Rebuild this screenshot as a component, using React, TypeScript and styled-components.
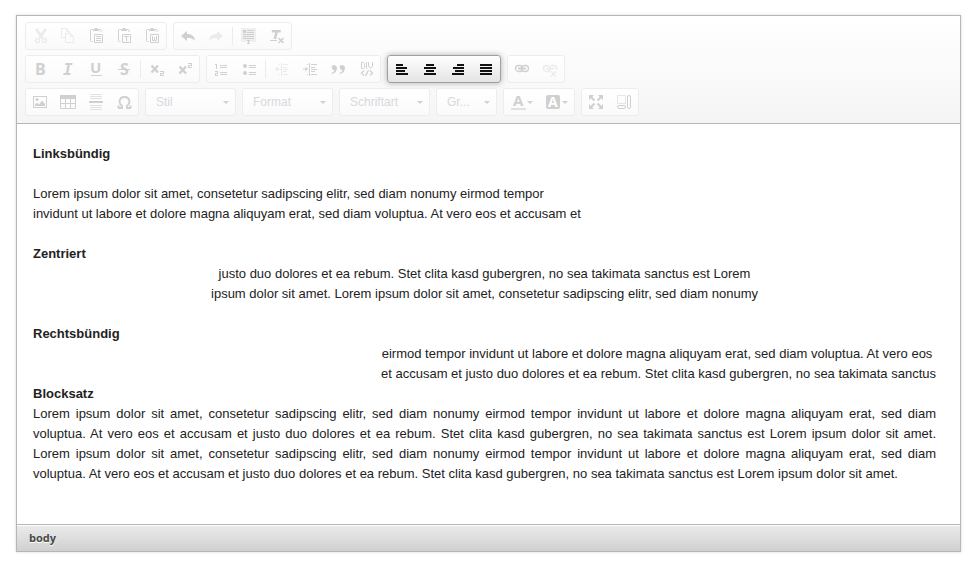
import React from 'react';
import styled, { createGlobalStyle, css } from 'styled-components';

const GlobalStyle = createGlobalStyle`
  *, *::before, *::after { box-sizing: border-box; }
  body {
    margin: 0;
    background: #fff;
    font-family: "Liberation Sans", Arial, Helvetica, sans-serif;
  }
`;

const Page = styled.main`
  padding: 15px 14px 14px 16px;
`;

const Editor = styled.section`
  border: 1px solid #b6b6b6;
  background: #fff;
  box-shadow: 0 0 3px rgba(0, 0, 0, 0.15);
`;

const Toolbar = styled.header`
  display: flex;
  flex-direction: column;
  gap: 5px;
  padding: 6px 8px 7px;
  border-bottom: 1px solid #b6b6b6;
  background: linear-gradient(#fff, #f5f5f5);
`;

const ToolRow = styled.div`
  display: flex;
  flex-wrap: wrap;
  gap: 5px 6px;
`;

const Group = styled.div<{ $active?: boolean }>`
  display: flex;
  align-items: center;
  height: 28px;
  border: 1px solid #ededed;
  border-radius: 3px;
  background: linear-gradient(#fff, #fafafa);
  color: #d0d0d0;
  ${(p) =>
    p.$active &&
    css`
      border-color: #a0a0a0;
      background: linear-gradient(#fff, #e4e4e4);
      box-shadow: 0 0 6px rgba(0, 0, 0, 0.3);
      color: #111;
    `}
`;

const ToolButton = styled.button<{ $faint?: boolean }>`
  display: flex;
  align-items: center;
  gap: 1px;
  height: 26px;
  padding: 0 6px;
  border: 0;
  background: none;
  color: ${(p) => (p.$faint ? '#ebebeb' : 'inherit')};
  cursor: pointer;
`;

const Separator = styled.span`
  width: 1px;
  height: 18px;
  margin: 0 2px;
  background: #ececec;
`;

const Icon = styled.svg`
  display: block;
  width: 16px;
  height: 16px;
  fill: currentColor;
  overflow: visible;
`;

const Arrow = styled.svg`
  display: block;
  width: 6px;
  height: 3px;
  fill: currentColor;
`;

const Combo = styled.label<{ $short?: boolean }>`
  display: grid;
  align-items: center;
  width: ${(p) => (p.$short ? '59px' : '89px')};

  & > * { grid-area: 1 / 1; }
  & > ${Arrow} {
    justify-self: end;
    margin-right: 6px;
    pointer-events: none;
  }
`;

const Select = styled.select`
  appearance: none;
  width: 100%;
  height: 26px;
  padding: 0 16px 0 10px;
  border: 0;
  background: none;
  color: #d8d8dc;
  font: 12px "Liberation Sans", Arial, sans-serif;
  cursor: pointer;
`;

const Content = styled.article`
  padding: 20px 24px 40px 16px;
  color: #222;
  font-size: 13px;
  line-height: 20px;
`;

const Heading = styled.h2<{ $spaced?: boolean }>`
  margin: 0 0 ${(p) => (p.$spaced ? '20px' : '0')};
  font-size: 13px;
  line-height: 20px;
`;

const Text = styled.p<{ $align: 'left' | 'center' | 'right' | 'justify'; $gap?: boolean }>`
  margin: 0 0 ${(p) => (p.$gap ? '20px' : '0')};
  text-align: ${(p) => p.$align};
`;

const Footer = styled.footer`
  display: flex;
  align-items: center;
  height: 27px;
  padding: 0 8px;
  border-top: 1px solid #b6b6b6;
  background: linear-gradient(#ebebeb, #cfd1cf);
  box-shadow: inset 0 1px 0 #fff;
`;

const PathLink = styled.a`
  padding: 0 4px;
  color: #484848;
  font: bold 11px/16px "Open Sans", "Noto Sans", sans-serif;
  text-decoration: none;
  text-shadow: 0 1px 0 #fff;
`;

const Clipboard = (
  <>
    <path d="M5 1.5H3.5Q2.5 1.5 2.5 2.5V12.5Q2.5 13.5 3.5 13.5H4.5M10 1.5H12Q13 1.5 13 2.5V4" fill="none" stroke="currentColor" />
    <path d="M5 3V1.5H6.5V0H9.5V1.5H11V3Z" />
    <path d="M6.5 6.5H14.5V14.5H6.5Z" fill="none" stroke="currentColor" />
  </>
);

const lines = (rows: number[][]) =>
  rows.map(([x, y, w, h], i) => <rect key={i} x={x} y={y} width={w} height={h} />);

const two = (x: number, y: number) => (
  <path
    d={`M${x} ${y}h4v3h-3v1h3v1h-4v-3h3v-1h-3z`}
    shapeRendering="crispEdges"
  />
);

const label = {
  fontFamily: '"Open Sans", "Noto Sans", sans-serif',
  fontWeight: 700,
};

const icons: Record<string, React.ReactNode> = {
  cut: (
    <>
      <path d="M4.2 1L10.5 10M13.8 1L7.5 10" stroke="currentColor" strokeWidth="2.6" />
      <circle cx="5.5" cy="12.5" r="2" fill="none" stroke="currentColor" strokeWidth="1.4" />
      <circle cx="12.5" cy="12.5" r="2" fill="none" stroke="currentColor" strokeWidth="1.4" />
    </>
  ),
  copy: (
    <g fill="none" stroke="currentColor">
      <path d="M5 9.5H1.5V.5H6.5L9.5 3.5V5" />
      <path d="M6.5 .5V3.5H9.5M5.5 5.5H10.5L13.5 8.5V14.5H5.5ZM10.5 5.5V8.5H13.5" />
    </g>
  ),
  paste: <>{Clipboard}{lines([[8, 8, 5, 1], [8, 10, 5, 1], [8, 12, 5, 1]])}</>,
  pasteText: <>{Clipboard}{lines([[8, 8, 5, 1], [10, 8, 1, 5]])}</>,
  pasteWord: <>{Clipboard}<path d="M8.5 8V12.5H10.5V9V12.5H12.5V8" fill="none" stroke="currentColor" /></>,
  undo: <path d="M1 8L7 3V6C12 6 14.5 8 15 13C13 10.5 11 10 7 10V13Z" />,
  redo: <path d="M15 8L9 3V6C4 6 1.5 8 1 13C3 10.5 5 10 9 10V13Z" />,
  selectAll: (
    <>
      <rect width="15" height="14" opacity=".3" />
      {lines([[2, 2, 3, 3], [6, 2, 7, 1], [6, 4, 7, 1], [2, 6, 11, 1], [2, 8, 11, 1], [2, 10, 11, 1], [6, 12, 3, 1], [7, 12, 1, 4], [6, 15, 3, 1]])}
    </>
  ),
  removeFormat: (
    <>
      <path d="M3 2H12L11.5 4.5H8.8L7.2 11H4.5L6.2 4.5H2.5Z" />
      <rect x="1" y="12" width="7" height="1" />
      <path d="M9.5 10L14.5 15M14.5 10L9.5 15" stroke="currentColor" strokeWidth="1.6" />
    </>
  ),
  bold: <text x="3" y="14" fontSize="16" {...label}>B</text>,
  italic: <text x="3" y="14" fontSize="16" fontFamily='"DejaVu Sans Mono", monospace' fontWeight="700" fontStyle="italic">I</text>,
  underline: <><text x="2" y="12" fontSize="15" {...label}>U</text><rect x="3" y="14" width="11" height="1" /></>,
  strike: <><text x="4" y="14" fontSize="16" {...label}>S</text><rect x="2" y="8" width="12" height="1" /></>,
  subscript: <><path d="M2.5 4.5L9 11.5M9 4.5L2.5 11.5" stroke="currentColor" strokeWidth="2.4" />{two(11, 10)}</>,
  superscript: <><path d="M2.5 5.5L9 12.5M9 5.5L2.5 12.5" stroke="currentColor" strokeWidth="2.4" />{two(11, 2)}</>,
  numbered: (
    <>
      {lines([[3, 3, 1, 5], [2, 3, 1, 1], [7, 4, 7, 1], [7, 6, 7, 1], [7, 11, 7, 1], [7, 13, 7, 1]])}
      <path d="M2 10h3v3h-2v1h2v1h-3v-3h2v-1h-2z" />
    </>
  ),
  bulleted: (
    <>
      <circle cx="4" cy="5" r="2" /><circle cx="4" cy="12" r="2" />
      {lines([[8, 4, 7, 1], [8, 6, 7, 1], [8, 11, 7, 1], [8, 13, 7, 1]])}
    </>
  ),
  outdent: (
    <>
      <path d="M1 8L4 5.5V7.5H7V8.5H4V10.5Z" />
      {lines([[5, 3, 1, 1], [7, 2, 1, 13], [9, 3, 5, 1], [9, 6, 4, 1], [9, 8, 5, 1], [9, 10, 4, 1], [9, 13, 5, 1], [5, 13, 1, 1]])}
    </>
  ),
  indent: (
    <>
      <path d="M6 8L3.5 5.5V7.5H1V8.5H3.5V10.5Z" />
      {lines([[5, 3, 1, 1], [7, 2, 1, 13], [9, 3, 6, 1], [9, 6, 4, 1], [9, 8, 6, 1], [9, 10, 4, 1], [9, 13, 6, 1], [5, 13, 1, 1]])}
    </>
  ),
  quote: (
    <>
      <path d="M4 4A2.5 2.5 0 1 0 4.5 9Q4 11.5 1.5 12V13Q7 12 7 6.5Q6.5 4 4 4Z" />
      <path d="M12 4A2.5 2.5 0 1 0 12.5 9Q12 11.5 9.5 12V13Q15 12 15 6.5Q14.5 4 12 4Z" />
    </>
  ),
  div: (
    <g fill="none" stroke="currentColor">
      <path d="M3.5 1.5H5.5L6.5 2.5V6.5L5.5 7.5H3.5ZM8.5 1V8M10.5 1V5L12.5 7.5L14.5 5V1" />
      <path d="M6 9.5L3.5 12L6 14.5M10.5 9L7.5 15M12 9.5L14.5 12L12 14.5" strokeWidth="1.3" />
    </g>
  ),
  alignLeft: lines([[2, 3, 7, 2], [2, 6, 11, 2], [2, 9, 9, 2], [2, 12, 12, 2]]),
  alignCenter: lines([[4, 3, 8, 2], [2, 6, 12, 2], [4, 9, 8, 2], [2, 12, 12, 2]]),
  alignRight: lines([[7, 3, 7, 2], [3, 6, 11, 2], [5, 9, 9, 2], [2, 12, 12, 2]]),
  alignJustify: lines([[2, 3, 12, 2], [2, 6, 12, 2], [2, 9, 12, 2], [2, 12, 12, 2]]),
  link: (
    <g fill="none" stroke="currentColor" strokeWidth="1.3">
      <rect x="1.5" y="4.5" width="7" height="6" rx="3" />
      <rect x="7.5" y="4.5" width="7" height="6" rx="3" />
      <path d="M4 7.5H12" strokeWidth="2" />
    </g>
  ),
  unlink: (
    <g fill="none" stroke="currentColor" strokeWidth="1.3">
      <rect x="1.5" y="4.5" width="7" height="6" rx="3" />
      <path d="M9 4.5H12Q14.5 4.5 14.5 7.5V9M4 7.5H12M9 10.5L14 15.5M14 10.5L9 15.5" strokeWidth="1.5" />
    </g>
  ),
  image: (
    <>
      <rect x="1.5" y="2.5" width="13" height="11" fill="none" stroke="currentColor" />
      <circle cx="5" cy="5.5" r="1.5" />
      <path d="M3 12V10.5L5 8.5L7 10.5L10 6.5L13 10V12Z" />
    </>
  ),
  table: (
    <>
      <rect y="1" width="16" height="4" />
      <path d="M.5 1.5H15.5V14.5H.5ZM5.5 5V14M10.5 5V14M1 9.5H15" fill="none" stroke="currentColor" />
    </>
  ),
  rule: (
    <>
      <rect x="1" y="7" width="14" height="2" />
      <g opacity=".6">{lines([[2, 0, 12, 1], [2, 2, 12, 1], [2, 4, 12, 1], [2, 11, 12, 1], [2, 13, 12, 1], [2, 15, 12, 1]])}</g>
    </>
  ),
  omega: <path d="M2 14H6V12Q3.5 10 3.5 7.5Q4 3 8.5 3Q13 3 13.5 7.5Q13.5 10 11 12V14H15M2.5 14V11.5M14.5 14V11.5" fill="none" stroke="currentColor" strokeWidth="1.9" />,
  textColor: <><text x="3" y="12" fontSize="15" {...label}>A</text><rect x="1" y="14" width="15" height="2" opacity=".6" /></>,
  bgColor: <><rect x="1" y="1" width="14" height="14" rx="2" /><text x="3" y="13" fontSize="14" fill="#fff" {...label}>A</text></>,
  maximize: (
    <>
      <path d="M1 1H6L1 6ZM15 1H10L15 6ZM1 15H6L1 10ZM15 15H10L15 10Z" />
      <path d="M3 3L6.5 6.5M13 3L9.5 6.5M3 13L6.5 9.5M13 13L9.5 9.5" stroke="currentColor" strokeWidth="2" />
    </>
  ),
  blocks: (
    <g fill="none" stroke="currentColor">
      <path d="M1.5 1.5H9.5V9.5H1.5Z" strokeDasharray="1 1" />
      <rect x="11.5" y="1.5" width="3" height="13" rx="1.5" />
      <rect x="1.5" y="11.5" width="8" height="3" rx="1.5" />
    </g>
  ),
};

const DownArrow = () => (
  <Arrow viewBox="0 0 6 3" aria-hidden="true"><path d="M0 0H6L3 3Z" /></Arrow>
);

type ToolProps = { icon: string; title: string; faint?: boolean; menu?: boolean };

const Tool = ({ icon, title, faint, menu }: ToolProps) => (
  <ToolButton type="button" aria-label={title} $faint={faint}>
    <Icon viewBox="0 0 16 16" aria-hidden="true">{icons[icon]}</Icon>
    {menu && <DownArrow />}
  </ToolButton>
);

const ComboBox = ({ name, text, short }: { name: string; text: string; short?: boolean }) => (
  <Group>
    <Combo $short={short}>
      <Select aria-label={name}>
        <option>{text}</option>
      </Select>
      <DownArrow />
    </Combo>
  </Group>
);

export default function App() {
  return (
    <>
      <GlobalStyle />
      <Page>
        <Editor>
          <Toolbar>
            <ToolRow>
              <Group>
                <Tool icon="cut" title="Ausschneiden" faint />
                <Tool icon="copy" title="Kopieren" faint />
                <Tool icon="paste" title="Einfügen" />
                <Tool icon="pasteText" title="Als Klartext einfügen" />
                <Tool icon="pasteWord" title="Aus Word einfügen" />
              </Group>
              <Group>
                <Tool icon="undo" title="Rückgängig" />
                <Tool icon="redo" title="Wiederherstellen" faint />
                <Separator />
                <Tool icon="selectAll" title="Alles auswählen" />
                <Tool icon="removeFormat" title="Formatierung entfernen" />
              </Group>
            </ToolRow>
            <ToolRow>
              <Group>
                <Tool icon="bold" title="Fett" />
                <Tool icon="italic" title="Kursiv" />
                <Tool icon="underline" title="Unterstrichen" />
                <Tool icon="strike" title="Durchgestrichen" />
                <Separator />
                <Tool icon="subscript" title="Tiefgestellt" />
                <Tool icon="superscript" title="Hochgestellt" />
              </Group>
              <Group>
                <Tool icon="numbered" title="Nummerierte Liste" />
                <Tool icon="bulleted" title="Liste" />
                <Separator />
                <Tool icon="outdent" title="Einzug verringern" faint />
                <Tool icon="indent" title="Einzug erhöhen" />
                <Tool icon="quote" title="Zitatblock" />
                <Tool icon="div" title="DIV-Container" />
              </Group>
              <Group $active>
                <Tool icon="alignLeft" title="Linksbündig" />
                <Tool icon="alignCenter" title="Zentriert" />
                <Tool icon="alignRight" title="Rechtsbündig" />
                <Tool icon="alignJustify" title="Blocksatz" />
              </Group>
              <Group>
                <Tool icon="link" title="Link" />
                <Tool icon="unlink" title="Link entfernen" faint />
              </Group>
            </ToolRow>
            <ToolRow>
              <Group>
                <Tool icon="image" title="Bild" />
                <Tool icon="table" title="Tabelle" />
                <Tool icon="rule" title="Horizontale Linie" />
                <Tool icon="omega" title="Sonderzeichen" />
              </Group>
              <ComboBox name="Stil" text="Stil" />
              <ComboBox name="Format" text="Format" />
              <ComboBox name="Schriftart" text="Schriftart" />
              <ComboBox name="Größe" text="Gr..." short />
              <Group>
                <Tool icon="textColor" title="Textfarbe" menu />
                <Tool icon="bgColor" title="Hintergrundfarbe" menu />
              </Group>
              <Group>
                <Tool icon="maximize" title="Maximieren" />
                <Tool icon="blocks" title="Blöcke anzeigen" />
              </Group>
            </ToolRow>
          </Toolbar>
          <Content>
            <Heading $spaced>Linksbündig</Heading>
            <Text $align="left" $gap>
              Lorem ipsum dolor sit amet, consetetur sadipscing elitr, sed diam nonumy eirmod tempor
              <br />
              invidunt ut labore et dolore magna aliquyam erat, sed diam voluptua. At vero eos et accusam et
            </Text>
            <Heading>Zentriert</Heading>
            <Text $align="center" $gap>
              justo duo dolores et ea rebum. Stet clita kasd gubergren, no sea takimata sanctus est Lorem
              <br />
              ipsum dolor sit amet. Lorem ipsum dolor sit amet, consetetur sadipscing elitr, sed diam nonumy
            </Text>
            <Heading>Rechtsbündig</Heading>
            <Text $align="right">
              eirmod tempor invidunt ut labore et dolore magna aliquyam erat, sed diam voluptua. At vero eos&nbsp;
              <br />
              et accusam et justo duo dolores et ea rebum. Stet clita kasd gubergren, no sea takimata sanctus
            </Text>
            <Heading>Blocksatz</Heading>
            <Text $align="justify">
              Lorem ipsum dolor sit amet, consetetur sadipscing elitr, sed diam nonumy eirmod tempor invidunt ut
              labore et dolore magna aliquyam erat, sed diam voluptua. At vero eos et accusam et justo duo dolores
              et ea rebum. Stet clita kasd gubergren, no sea takimata sanctus est Lorem ipsum dolor sit amet. Lorem
              ipsum dolor sit amet, consetetur sadipscing elitr, sed diam nonumy eirmod tempor invidunt ut labore et
              dolore magna aliquyam erat, sed diam voluptua. At vero eos et accusam et justo duo dolores et ea
              rebum. Stet clita kasd gubergren, no sea takimata sanctus est Lorem ipsum dolor sit amet.
            </Text>
          </Content>
          <Footer>
            <PathLink href="#body">body</PathLink>
          </Footer>
        </Editor>
      </Page>
    </>
  );
}
